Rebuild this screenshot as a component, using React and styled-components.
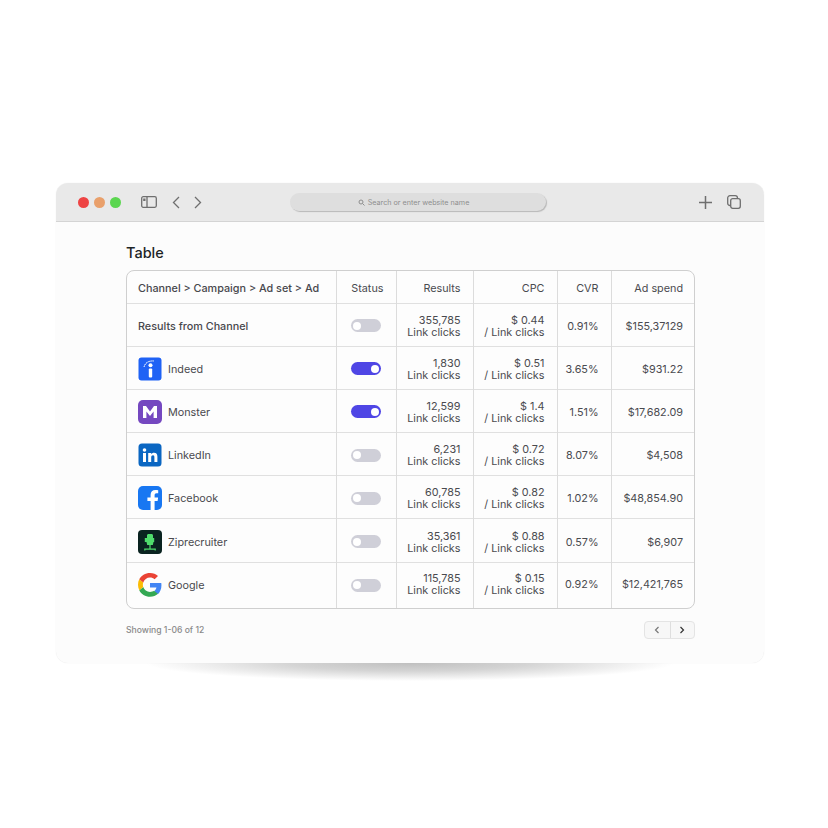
import React from "react";
import styled, { createGlobalStyle } from "styled-components";

const Global = createGlobalStyle`
  html, body { margin: 0; background: #fff; }
  body { font-family: Inter, "Liberation Sans", sans-serif; color: #3f3f46; }
`;

const Page = styled.div`
  width: 828px;
  height: 828px;
  padding: 183px 64px 0 56px;
  box-sizing: border-box;
  overflow: hidden;
`;

const Browser = styled.div`
  position: relative;
  width: 708px;
  height: 480px;
  border-radius: 12px;
  background: #fcfcfc;
  box-shadow: 0 0 1px rgba(0, 0, 0, 0.12);
  display: flex;
  flex-direction: column;
`;

const Shadow = styled.div`
  position: absolute;
  left: 90px;
  right: 90px;
  top: 480px;
  height: 18px;
  background: radial-gradient(50% 100% at 50% 0, #bfbfbf 0, #d4d4d4 45%, rgba(255, 255, 255, 0) 100%);
`;

const TitleBar = styled.div`
  height: 38px;
  flex: none;
  display: flex;
  align-items: center;
  padding: 0 23px 0 22px;
  background: #e9e9e9;
  border-bottom: 1px solid #d4d4d4;
  border-radius: 12px 12px 0 0;
`;

const Dot = styled.span`
  width: 11px;
  height: 11px;
  border-radius: 50%;
  margin-right: 5px;
  background: ${({ color }) => color};
`;

const ToolIcon = styled.svg`
  flex: none;
  fill: none;
  stroke: #6f6f6f;
  stroke-width: 1.3;
  margin-left: ${({ gap }) => gap || 0}px;
`;

const Address = styled.div`
  width: 256px;
  height: 18px;
  box-sizing: border-box;
  padding-right: 9px;
  margin-left: 88px;
  margin-right: auto;
  border-radius: 9px;
  background: #dedede;
  box-shadow: 1px 1px 1px #b8b8b8;
  display: flex;
  align-items: center;
  justify-content: center;
  gap: 3px;
  font-size: 7.2px;
  color: #8e8e8e;
`;

const Content = styled.div`
  padding: 22px 69px 0 70px;
`;

const Heading = styled.h1`
  margin: 0 0 8px;
  font-size: 14.5px;
  line-height: 18px;
  font-weight: 500;
  color: #1c2426;
`;

const TableCard = styled.div`
  border: 1px solid #cfcfcf;
  border-radius: 8px;
  background: #fdfdfd;
  overflow: hidden;
`;

const Table = styled.table`
  width: 100%;
  border-collapse: collapse;
  table-layout: fixed;
  font-size: 10.8px;
  line-height: 12px;
  color: #4a4a4f;

  th, td {
    border-left: 1px solid #dcdcdc;
    border-top: 1px solid #e0e0e0;
    padding: 2px 12px 0 0;
    text-align: right;
    font-weight: 400;
    box-sizing: border-box;
    white-space: nowrap;
  }
  td:nth-child(n + 3) { padding-top: 4px; }
  th { padding-top: 4px; }
  th:last-child, td:last-child { padding-right: 11px; }
  th:first-child { border-left: 0; padding: 1px 0 0 11px; text-align: left; }
  td:first-child { border-left: 0; padding: 2px 0 0 11px; text-align: left; }
  thead th { border-top: 0; height: 32px; }
  tbody td { height: 43.2px; }
  tbody tr:last-child td { height: 46px; padding-top: 0; }
`;

const Lead = styled.span`
  display: block;
  padding-top: 3px;
  font-size: 10.8px;
  font-weight: 500;
  color: #47474c;
`;

const Channel = styled.div`
  display: flex;
  align-items: center;
  gap: 6px;
`;

const ChannelName = styled.span`
  padding-top: 2px;
`;

const ChannelLogo = styled.svg`
  width: 24px;
  height: 24px;
  flex: none;
`;

const Toggle = styled.span`
  display: block;
  position: relative;
  width: 30px;
  height: 13px;
  margin: 0 0 0 14px;
  border-radius: 7px;
  background: ${({ on }) => (on ? "#4f46e5" : "#cfcfd8")};

  &::after {
    content: "";
    position: absolute;
    top: 2.5px;
    left: ${({ on }) => (on ? "20px" : "2px")};
    width: 8px;
    height: 8px;
    border-radius: 50%;
    background: #fff;
  }
`;

const Footer = styled.div`
  display: flex;
  justify-content: space-between;
  align-items: center;
  margin-top: 12px;
`;

const Showing = styled.span`
  font-size: 8.6px;
  font-weight: 500;
  color: #8a8a8a;
`;

const Pager = styled.div`
  display: flex;
  border: 1px solid #e4e4e4;
  border-radius: 4px;
  background: #f7f7f7;
`;

const PagerButton = styled.button`
  width: 24.5px;
  height: 16px;
  padding: 0;
  border: 0;
  background: none;
  display: flex;
  align-items: center;
  justify-content: center;
  & + & { border-left: 1px solid #dedede; }
`;

const Indeed = () => (
  <ChannelLogo viewBox="0 0 24 24">
    <rect x=".5" y=".5" width="23" height="23" rx="3" fill="#1f62f5" />
    <path d="M6 10C7 6 10.500 3.500 16 4" fill="none" stroke="#fff" strokeWidth="1" strokeDasharray="1.500 .5" />
    <circle cx="12.500" cy="8.200" r="2" fill="#fff" />
    <rect x="10.800" y="11.500" width="3.400" height="9" rx="1" fill="#fff" />
  </ChannelLogo>
);

const Monster = () => (
  <ChannelLogo viewBox="0 0 24 24">
    <rect width="24" height="24" rx="5" fill="#7548c0" />
    <path d="M5 18V6h3l4 5.500L16 6h3v12h-3.400v-6.500L12 16l-3.600-4.500V18z" fill="#fff" />
  </ChannelLogo>
);

const Linkedin = () => (
  <ChannelLogo viewBox="0 0 24 24">
    <rect x="0.500" y="0.500" width="23" height="23" rx="3.500" fill="#0a66c2" />
    <rect x="5" y="10" width="3" height="9" fill="#fff" />
    <circle cx="6.500" cy="7" r="1.800" fill="#fff" />
    <path d="M10.200 10h2.900v1.300c.6-1 1.700-1.500 2.900-1.500 2.500 0 3.400 1.600 3.400 4V19h-3v-4.600c0-1.200-.3-2.100-1.400-2.100s-1.800.9-1.800 2.100V19h-3z" fill="#fff" />
  </ChannelLogo>
);

const Facebook = () => (
  <ChannelLogo viewBox="0 0 24 24">
    <rect width="24" height="24" rx="5" fill="#1877f2" />
    <path d="M16.600 24v-9h3l.5-3.600h-3.500V9.200c0-1 .5-1.900 2-1.900h1.600V4.200c-.9-.1-1.900-.2-2.800-.2-2.900 0-4.800 1.700-4.800 4.900v2.500H9.400V15h3.200v9z" fill="#fff" />
  </ChannelLogo>
);

const Ziprecruiter = () => (
  <ChannelLogo viewBox="0 0 24 24">
    <rect width="24" height="24" rx="4" fill="#0a2320" />
    <path d="M9 5.500c0-.8.6-1.500 1.500-1.500h3c.9 0 1.500.7 1.500 1.500V8h1.200v4H15.500l-.7 3H9.200l-.7-3H6.800V8H9z" fill="#4fdc6c" />
    <path d="M12 15v4M6.800 20.500V19.200h10.400v1.300" fill="none" stroke="#4fdc6c" strokeWidth="1.200" />
  </ChannelLogo>
);

const Google = () => (
  <ChannelLogo viewBox="0 0 48 48">
    <path fill="#4285f4" d="M46.900 24.500c0-1.600-.1-3.100-.4-4.500H24v9.100h12.900c-.6 3-2.200 5.500-4.800 7.200l7.700 6c4.500-4.200 7.100-10.300 7.100-17.800z" />
    <path fill="#34a853" d="M24 47.500c6.500 0 11.900-2.100 15.800-5.800l-7.700-6c-2.100 1.400-4.900 2.300-8.100 2.300-6.300 0-11.600-4.200-13.500-9.900l-8 6.200C6.400 42.100 14.600 47.500 24 47.500z" />
    <path fill="#fbbc05" d="M10.500 28.100c-.5-1.400-.8-3-.8-4.600s.3-3.200.8-4.600l-8-6.200C.9 15.900 0 19.600 0 23.500s.9 7.600 2.500 10.800z" />
    <path fill="#ea4335" d="M24 9c3.500 0 6.700 1.200 9.200 3.600l6.800-6.800C35.900 2 30.500 0 24 0 14.600 0 6.400 5.400 2.500 12.700l8 6.200C12.400 13.200 17.700 9 24 9z" />
  </ChannelLogo>
);

const rows = [
  { name: "Indeed", Logo: Indeed, on: true, results: "1,830", cpc: "$ 0.51", cvr: "3.65%", spend: "$931.22" },
  { name: "Monster", Logo: Monster, on: true, results: "12,599", cpc: "$ 1.4", cvr: "1.51%", spend: "$17,682.09" },
  { name: "LinkedIn", Logo: Linkedin, results: "6,231", cpc: "$ 0.72", cvr: "8.07%", spend: "$4,508" },
  { name: "Facebook", Logo: Facebook, results: "60,785", cpc: "$ 0.82", cvr: "1.02%", spend: "$48,854.90" },
  { name: "Ziprecruiter", Logo: Ziprecruiter, results: "35,361", cpc: "$ 0.88", cvr: "0.57%", spend: "$6,907" },
  { name: "Google", Logo: Google, results: "115,785", cpc: "$ 0.15", cvr: "0.92%", spend: "$12,421,765" },
];

const Metrics = ({ results, cpc, cvr, spend }) => (
  <>
    <td>{results}<br />Link clicks</td>
    <td>{cpc}<br />/ Link clicks</td>
    <td>{cvr}</td>
    <td>{spend}</td>
  </>
);

export default function App() {
  return (
    <Page>
      <Global />
      <Browser>
        <TitleBar>
          <Dot color="#ee4444" />
          <Dot color="#e9a06b" />
          <Dot color="#5bd650" />
          <ToolIcon gap={15} width="16" height="12" viewBox="0 0 16 12">
            <rect x=".7" y=".7" width="14.600" height="10.600" rx="1.500" />
            <path d="M6 .7v10.600" />
            <rect x="2.200" y="2.500" width="2.300" height="2.500" fill="#6f6f6f" stroke="none" />
          </ToolIcon>
          <ToolIcon gap={15} width="8" height="13" viewBox="0 0 8 13">
            <path d="M7 1L1.500 6.500 7 12" />
          </ToolIcon>
          <ToolIcon gap={14} width="8" height="13" viewBox="0 0 8 13">
            <path d="M1 1l5.500 5.500L1 12" />
          </ToolIcon>
          <Address>
            <svg width="7" height="7" viewBox="0 0 7 7" fill="none" stroke="#8e8e8e">
              <circle cx="3" cy="3" r="2" />
              <path d="M4.500 4.500L6.500 6.500" />
            </svg>
            Search or enter website name
          </Address>
          <ToolIcon width="13" height="13" viewBox="0 0 13 13" style={{ strokeWidth: 1.5 }}>
            <path d="M6.500 0v13M0 6.500h13" />
          </ToolIcon>
          <ToolIcon gap={15} width="14" height="14" viewBox="0 0 14 14">
            <rect x="3.700" y="3.700" width="9.600" height="9.600" rx="2" />
            <path d="M3.500 10.500H3A2.300 2.300 0 0 1 .7 8.200V3A2.300 2.300 0 0 1 3 .7h5.200A2.300 2.300 0 0 1 10.500 3v.5" />
          </ToolIcon>
        </TitleBar>
        <Content>
          <Heading>Table</Heading>
          <TableCard>
            <Table>
              <colgroup>
                <col style={{ width: 209 }} />
                <col style={{ width: 60 }} />
                <col style={{ width: 77 }} />
                <col style={{ width: 84 }} />
                <col style={{ width: 54 }} />
                <col style={{ width: 83 }} />
              </colgroup>
              <thead>
                <tr>
                  <th><Lead>Channel &gt; Campaign &gt; Ad set &gt; Ad</Lead></th>
                  <th>Status</th>
                  <th>Results</th>
                  <th>CPC</th>
                  <th>CVR</th>
                  <th>Ad spend</th>
                </tr>
              </thead>
              <tbody>
                <tr>
                  <td><Lead>Results from Channel</Lead></td>
                  <td><Toggle /></td>
                  <Metrics results="355,785" cpc="$ 0.44" cvr="0.91%" spend="$155,37129" />
                </tr>
                {rows.map(({ name, Logo, on, ...metrics }) => (
                  <tr key={name}>
                    <td>
                      <Channel>
                        <Logo />
                        <ChannelName>{name}</ChannelName>
                      </Channel>
                    </td>
                    <td><Toggle on={on} /></td>
                    <Metrics {...metrics} />
                  </tr>
                ))}
              </tbody>
            </Table>
          </TableCard>
          <Footer>
            <Showing>Showing 1-06 of 12</Showing>
            <Pager>
              <PagerButton aria-label="Previous">
                <svg width="6" height="8" viewBox="0 0 6 8" fill="none" stroke="#777" strokeWidth="1.200"><path d="M4.500 1L1.500 4l3 3" /></svg>
              </PagerButton>
              <PagerButton aria-label="Next">
                <svg width="6" height="8" viewBox="0 0 6 8" fill="none" stroke="#333" strokeWidth="1.200"><path d="M1.500 1l3 3-3 3" /></svg>
              </PagerButton>
            </Pager>
          </Footer>
        </Content>
        <Shadow />
      </Browser>
    </Page>
  );
}
